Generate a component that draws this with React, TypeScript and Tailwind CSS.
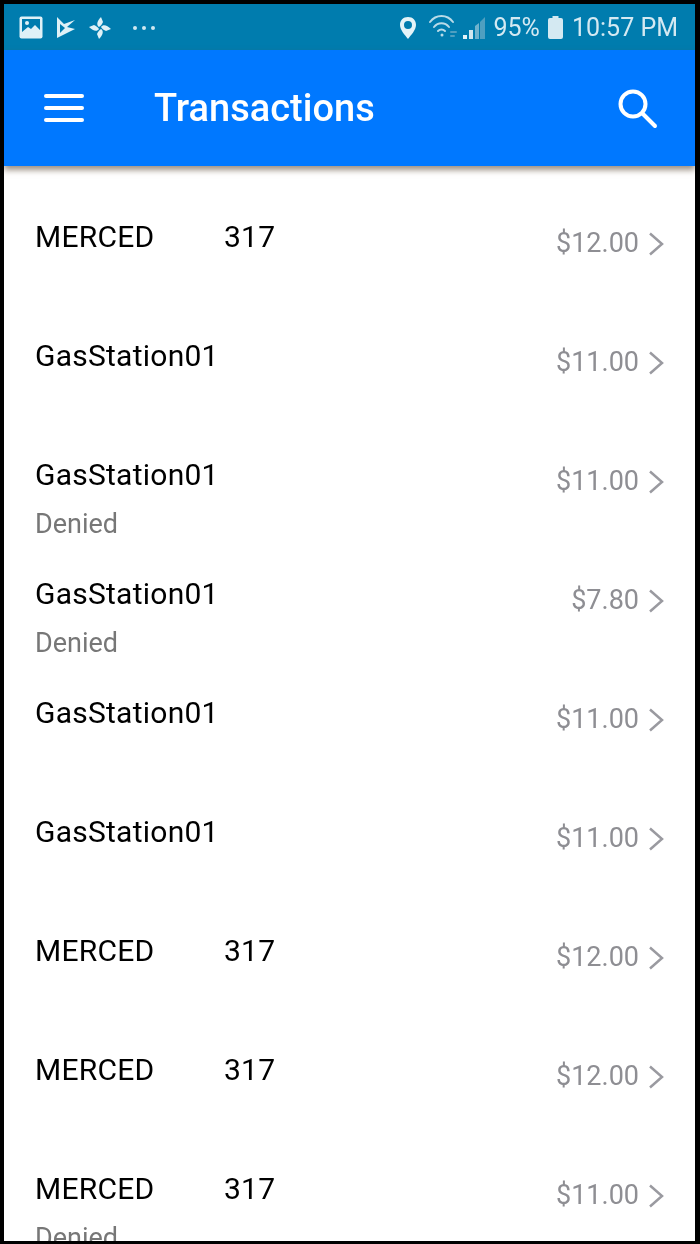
import React from "react";

type Row = { name: string; num?: string; price: string; denied?: boolean };
const rows: Row[] = [
  { name: "MERCED", num: "317", price: "$12.00" },
  { name: "GasStation01", price: "$11.00" },
  { name: "GasStation01", price: "$11.00", denied: true },
  { name: "GasStation01", price: "$7.80", denied: true },
  { name: "GasStation01", price: "$11.00" },
  { name: "GasStation01", price: "$11.00" },
  { name: "MERCED", num: "317", price: "$12.00" },
  { name: "MERCED", num: "317", price: "$12.00" },
  { name: "MERCED", num: "317", price: "$11.00", denied: true },
];

function StatusLeft() {
  return (
    <div className="flex items-center">
      <svg width="24" height="23" viewBox="0 0 24 23" className="ml-[15px]">
        <rect x="0.5" y="0.5" width="23" height="22" rx="2" fill="#dff1f7" />
        <rect x="3" y="3" width="18" height="13" fill="#007cae" />
        <circle cx="8" cy="7" r="2" fill="#dff1f7" />
        <path d="M3 16 L9 11 L12 13 L16 9 L21 14 V18 H3 Z" fill="#dff1f7" />
      </svg>
      <svg width="20" height="23" viewBox="0 0 20 23" className="ml-[13px]">
        <path d="M1 1 L8 8 L19 4 L11 11 L19 13 L1 22 Z" fill="#dff1f7" />
        <path d="M4 8 L9 12 L4 17 Z" fill="#007cae" />
      </svg>
      <svg width="24" height="24" viewBox="0 0 24 24" className="ml-[12px]">
        <path d="M11 11 C8 9 9 5 13 1 L15 6 C14 8 13 10 11 11 Z" fill="#dff1f7" />
        <path d="M13 11 C15 8 19 9 23 13 L18 15 C16 14 14 13 13 11 Z" fill="#dff1f7" />
        <path d="M13 13 C16 15 15 19 11 23 L9 18 C10 16 11 14 13 13 Z" fill="#dff1f7" />
        <path d="M11 13 C9 16 5 15 1 11 L6 9 C8 10 10 11 11 13 Z" fill="#dff1f7" />
      </svg>
      <span className="ml-[21px] flex gap-[5px]">
        <i className="block h-[4px] w-[4px] rounded-full bg-[#cfe8f1]" />
        <i className="block h-[4px] w-[4px] rounded-full bg-[#cfe8f1]" />
        <i className="block h-[4px] w-[4px] rounded-full bg-[#cfe8f1]" />
      </span>
    </div>
  );
}

function StatusRight() {
  return (
    <div className="flex items-center">
      <svg width="18" height="24" viewBox="0 0 18 24">
        <path fillRule="evenodd" d="M9 1 C4 1 1 4.5 1 9 C1 14 6 19 9 23 C12 19 17 14 17 9 C17 4.5 14 1 9 1 Z M9 5 A4 4 0 1 1 9 13 A4 4 0 1 1 9 5 Z" fill="#e4f3f8" />
      </svg>
      <svg width="30" height="26" viewBox="0 0 30 26" className="ml-[11px]" fill="none" stroke="#b9dbe8" strokeWidth="2" strokeLinecap="round">
        <path d="M2 7 C8 -1 19 -1 25 7" />
        <path d="M6 12 C10 7 17 7 21 12" />
        <path d="M10 16 C12 14 15 14 17 16" />
        <circle cx="14" cy="20" r="1.5" fill="#b9dbe8" stroke="none" />
        <path d="M23 17 L28 17 M23 21 L26 21" stroke="#4f9fc0" />
      </svg>
      <svg width="24" height="24" viewBox="0 0 24 24" className="ml-[4px]">
        <rect x="1" y="19" width="4" height="4" fill="#e4f3f8" />
        <rect x="7" y="14" width="4" height="9" fill="#cfe6ef" />
        <path d="M13 10 L17 7 V23 H13 Z" fill="#6fb2cd" />
        <path d="M18 6 L23 1 V23 H18 Z" fill="#4f9fc0" />
      </svg>
      <span className="ml-[8px] text-[25px] leading-none text-[#d4e9f2]">95%</span>
      <svg width="15" height="23" viewBox="0 0 15 23" className="ml-[8px]">
        <path d="M4.5 0 H10.5 V2 H13 A2 2 0 0 1 15 4 V21 A2 2 0 0 1 13 23 H2 A2 2 0 0 1 0 21 V4 A2 2 0 0 1 2 2 H4.5 Z" fill="#d4e9f2" />
      </svg>
      <span className="ml-[9px] text-[25px] leading-none text-[#d4e9f2]">10:57 PM</span>
    </div>
  );
}

export default function App() {
  return (
    <div className="relative h-[1244px] w-[700px] overflow-hidden border-t-[4px] border-r-[5px] border-b-[3px] border-l-[4px] border-black bg-white font-['Roboto',sans-serif] blur-[0.4px]">
      <div className="flex h-[46px] items-center justify-between bg-[#007cae] pt-[1px] pr-[17px] pl-0">
        <StatusLeft />
        <StatusRight />
      </div>
      <header className="relative z-10 flex h-[116px] items-center bg-[#0078ff] shadow-[0_4px_6px_rgba(90,70,50,0.6)]">
        <div className="ml-[40px] flex w-[40px] flex-col gap-[8px]">
          <i className="block h-[4px] rounded-full bg-white" />
          <i className="block h-[4px] rounded-full bg-white" />
          <i className="block h-[4px] rounded-full bg-white" />
        </div>
        <h1 className="ml-[70px] text-[38px] leading-none font-medium text-white">Transactions</h1>
        <svg width="40" height="40" viewBox="0 0 40 40" fill="none" stroke="white" strokeWidth="4" strokeLinecap="round" className="mt-[1px] mr-[37px] ml-auto">
          <circle cx="15" cy="15" r="12.5" />
          <path d="M24.5 24.5 L37 37" />
        </svg>
      </header>
      <ul className="pt-[24px]">
        {rows.map((r, i) => (
          <li key={i} className="relative flex h-[119px] justify-between pr-[31px] pl-[31px]">
            <div>
              <div className="flex h-[93px] items-center text-[30px] leading-none tracking-[0.25px] text-black">
                <span className="w-[189px]">{r.name}</span>
                {r.num && <span>{r.num}</span>}
              </div>
              {r.denied && <div className="-mt-[12px] text-[27px] leading-[30px] text-[#777777]">Denied</div>}
            </div>
            <div className="flex h-[107px] items-center text-[27px] leading-none text-[#8e8e93]">
              <span>{r.price}</span>
              <svg width="16" height="24" viewBox="0 0 16 24" fill="none" stroke="#9a9aa0" strokeWidth="2.5" className="ml-[9px]">
                <path d="M2 1.5 L14 12 L2 22.5" />
              </svg>
            </div>
          </li>
        ))}
      </ul>
    </div>
  );
}
